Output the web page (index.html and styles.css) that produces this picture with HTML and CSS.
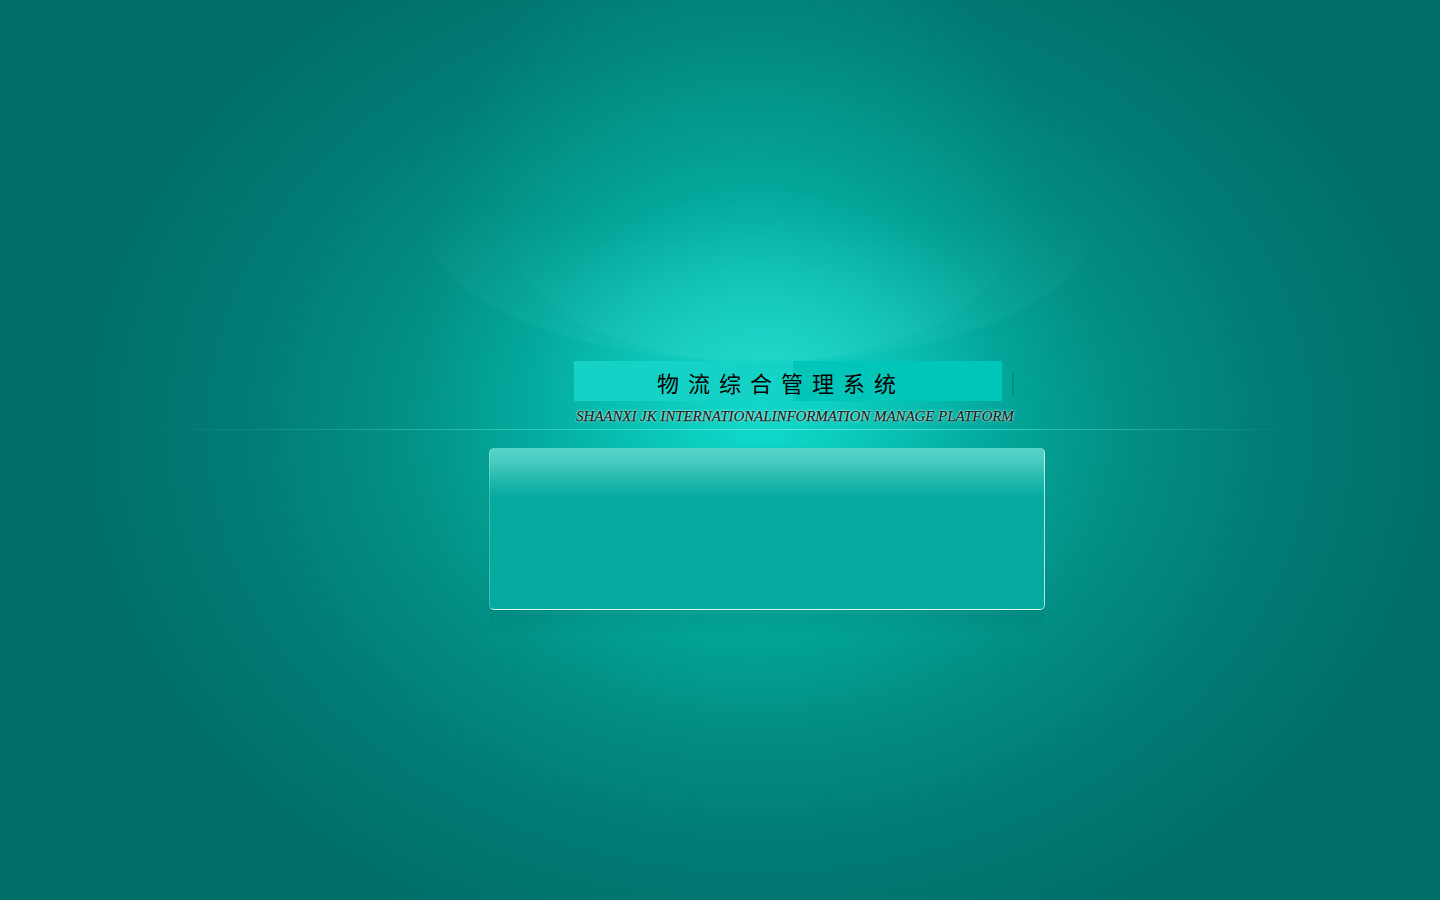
FILE: index.html
```html
<!DOCTYPE html>
<html lang="zh-CN">
<head>
<meta charset="utf-8">
<title>物流综合管理系统</title>
<link rel="stylesheet" href="styles.css">
</head>
<body>
<div class="arc arc-outer"></div>
<div class="arc arc-inner"></div>
<main class="stage">
  <header class="brand">
    <div class="band">
      <span class="band-left"></span>
      <h1 class="title">物流综合管理系统</h1>
      <span class="band-tick"></span>
    </div>
    <p class="subtitle">SHAANXI JK INTERNATIONALINFORMATION MANAGE PLATFORM</p>
  </header>
  <div class="rule"></div>
  <section class="panel-wrap">
    <div class="panel"></div>
    <div class="reflection"></div>
  </section>
</main>
</body>
</html>
```
FILE: styles.css
```css
html, body {
  margin: 0;
  padding: 0;
  height: 100%;
}
body {
  position: relative;
  width: 1440px;
  height: 900px;
  overflow: hidden;
  font-family: "Noto Sans CJK SC", "Noto Sans", sans-serif;
  background-color: #006f68;
  background-image:
    radial-gradient(ellipse 230px 160px at 765px 350px, rgba(40, 230, 215, 0.35) 0%, rgba(40, 230, 215, 0) 100%),
    radial-gradient(ellipse 320px 420px at 745px 300px, rgba(10, 205, 190, 0.35) 0%, rgba(10, 205, 190, 0) 100%),
    radial-gradient(ellipse 700px 560px at 760px 430px, #0bd9c8 0%, #05c2b3 14%, #03a89c 32%, #038f85 52%, #017d75 72%, #006f68 100%);
}
.arc {
  position: absolute;
  border-radius: 50%;
  pointer-events: none;
}
.arc-outer {
  left: 425px;
  top: 82px;
  width: 670px;
  height: 280px;
  background: linear-gradient(180deg, rgba(140, 255, 240, 0) 45%, rgba(140, 255, 240, 0.06) 100%);
}
.arc-inner {
  left: 505px;
  top: 90px;
  width: 510px;
  height: 272px;
  background: linear-gradient(180deg, rgba(140, 255, 240, 0) 50%, rgba(140, 255, 240, 0.05) 100%);
}
.stage {
  position: relative;
  display: flex;
  flex-direction: column;
  padding-top: 361px;
}
.brand {
  display: flex;
  flex-direction: column;
  margin-left: 574px;
  width: 460px;
}
.band {
  position: relative;
  width: 428px;
  height: 40px;
  background: #00c6ba;
  display: flex;
  align-items: center;
  justify-content: center;
}
.band-left {
  position: absolute;
  left: 0;
  top: 0;
  width: 219px;
  height: 40px;
  background: #14d3c6;
}
.band-tick {
  position: absolute;
  right: -12px;
  top: 12px;
  width: 2px;
  height: 22px;
  background: rgba(0, 90, 85, 0.3);
}
.title {
  position: relative;
  margin: 2px 0 0 -14px;
  font-size: 22px;
  font-weight: 400;
  letter-spacing: 9px;
  color: #000;
  line-height: 40px;
}
.subtitle {
  margin: 6px 0 0 2px;
  font-family: "Liberation Serif", serif;
  font-style: italic;
  font-size: 15px;
  letter-spacing: -0.06px;
  line-height: 18px;
  color: #0a1f1d;
  -webkit-text-stroke: 0.25px #0a1f1d;
  white-space: nowrap;
  text-shadow: 0 0 1px #d0faf5, 0 0 2px #c0f5ef, 0 0 2px #b0efe8;
}
.rule {
  margin-top: 4px;
  height: 1px;
  background: linear-gradient(90deg, rgba(80, 230, 215, 0) 10%, rgba(80, 230, 215, 0.55) 40%, rgba(120, 240, 230, 0.75) 55%, rgba(80, 230, 215, 0.45) 75%, rgba(80, 230, 215, 0) 90%);
}
.panel-wrap {
  margin-top: 18px;
  margin-left: 489px;
  width: 556px;
  display: flex;
  flex-direction: column;
}
.panel {
  height: 162px;
  border-radius: 5px;
  box-sizing: border-box;
  background: linear-gradient(180deg, #58d3c8 0%, #48ccc0 8%, #22b8ad 20%, #07aaa1 30%, #05a9a0 100%);
  border-right: 1px solid rgba(230, 255, 252, 0.75);
  border-bottom: 1px solid rgba(230, 255, 252, 0.9);
  border-left: 1px solid rgba(200, 255, 250, 0.3);
  box-shadow: 0 1px 2px rgba(0, 80, 75, 0.3);
}
.reflection {
  margin-top: 3px;
  height: 60px;
  border-radius: 5px 5px 0 0;
  background: linear-gradient(180deg, rgba(0, 120, 112, 0.25) 0%, rgba(0, 150, 140, 0.1) 40%, rgba(0, 150, 140, 0) 100%);
  border-top: 1px solid rgba(0, 110, 104, 0.2);
}
```
